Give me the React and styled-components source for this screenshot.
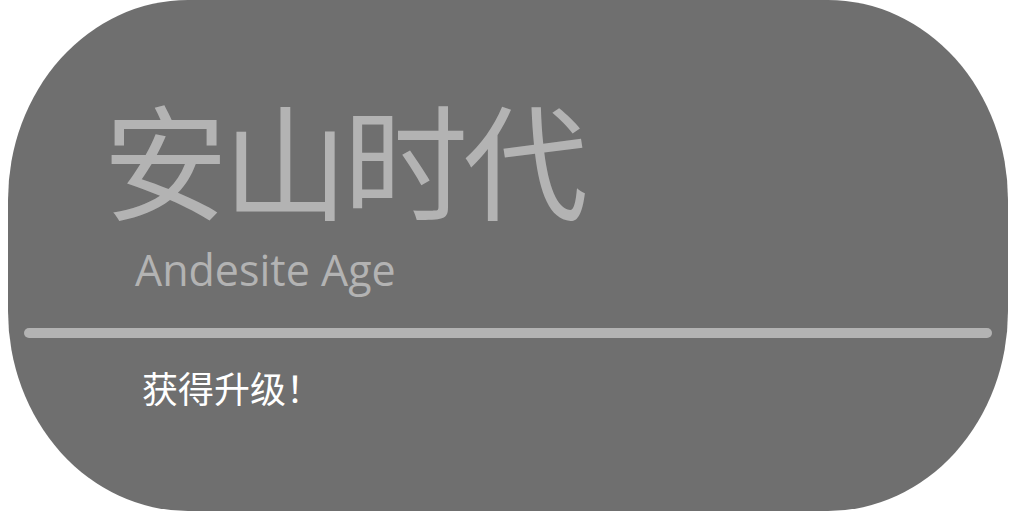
import styled, { createGlobalStyle } from "styled-components";

const GlobalStyle = createGlobalStyle`
  html, body {
    margin: 0;
    padding: 0;
    background: #ffffff;
  }
`;

export default function App() {
  return (
    <>
      <GlobalStyle />
      <Pagina>
        <Tarjeta>
          <Cabecera>
            <Titulo>安山时代</Titulo>
            <Subtitulo>Andesite Age</Subtitulo>
          </Cabecera>
          <Separador />
          <Mensaje>获得升级！</Mensaje>
        </Tarjeta>
      </Pagina>
    </>
  );
}

const Pagina = styled.div`
  width: 1024px;
  height: 512px;
  padding: 0 16px 0 8px;
  box-sizing: border-box;
`;

const Tarjeta = styled.div`
  width: 1000px;
  height: 511px;
  background-color: #6f6f6f;
  border-radius: 180px / 200px;
  display: flex;
  flex-direction: column;
  overflow: hidden;
`;

const Cabecera = styled.div`
  padding: 88px 0 0 95px;
  display: flex;
  flex-direction: column;
`;

const Titulo = styled.h1`
  margin: 0;
  font-family: "Noto Sans CJK SC", sans-serif;
  font-weight: 400;
  font-size: 125px;
  line-height: 1.1;
  color: #b3b3b3;
  letter-spacing: -5px;
`;

const Subtitulo = styled.div`
  margin: 22px 0 0 32px;
  font-family: "Open Sans", sans-serif;
  font-size: 43px;
  line-height: 1;
  color: #b3b3b3;
`;

const Separador = styled.div`
  height: 10px;
  margin: 37px 16px 0 16px;
  border-radius: 5px;
  background-color: #b3b3b3;
`;

const Mensaje = styled.div`
  margin: 31px 0 0 134px;
  font-family: "Noto Sans CJK SC", sans-serif;
  font-size: 36px;
  line-height: 1;
  color: #ffffff;
`;
